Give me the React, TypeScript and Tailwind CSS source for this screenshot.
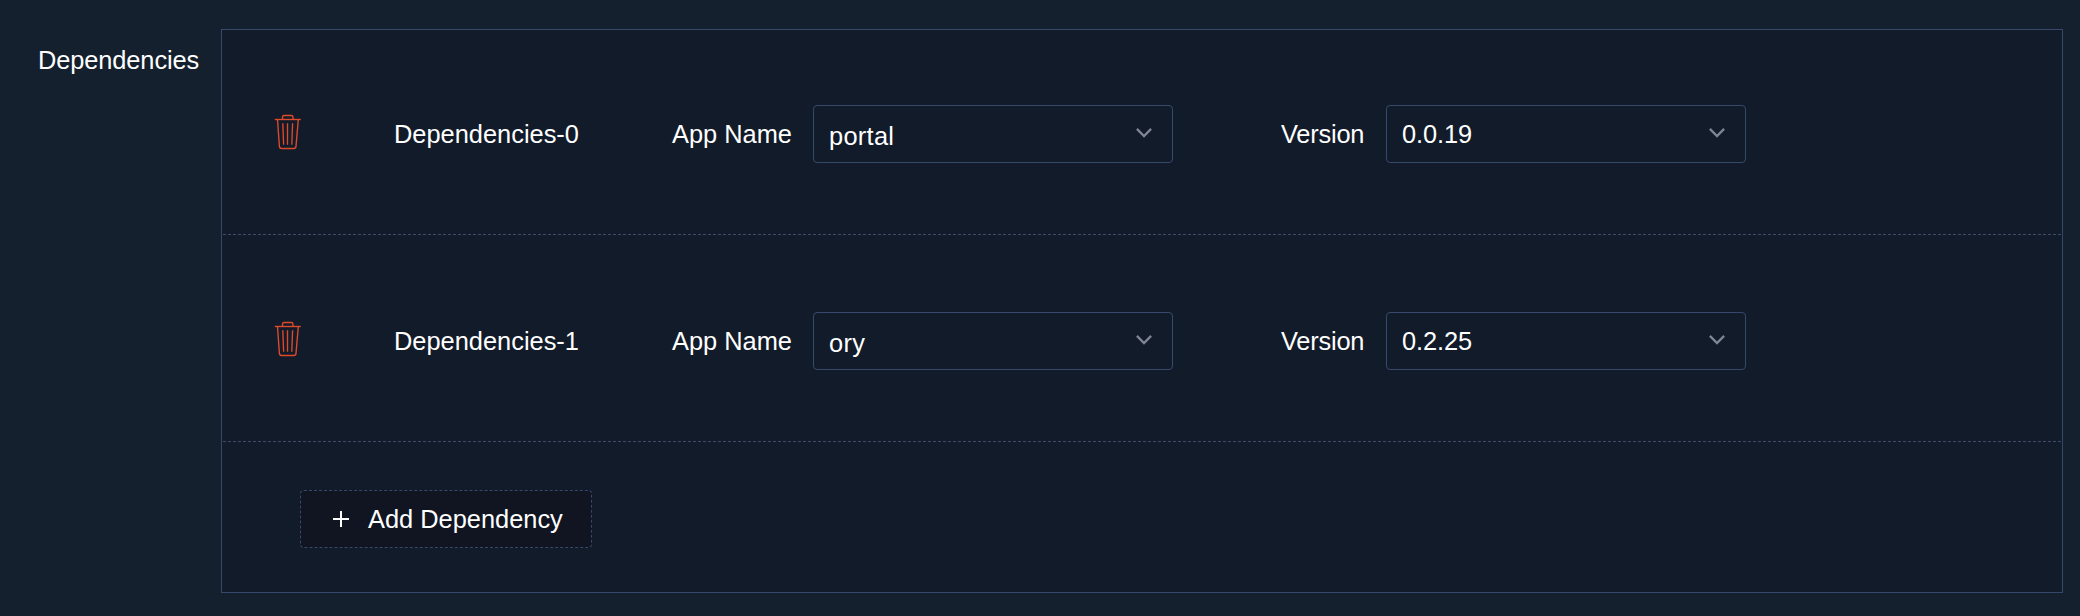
import React from "react";

type Dependency = { app: string; version: string };

const dependencies: Dependency[] = [
  { app: "portal", version: "0.0.19" },
  { app: "ory", version: "0.2.25" },
];

function TrashIcon() {
  return (
    <svg width="28" height="36" viewBox="0 0 28 36" fill="none" stroke="#e04a2a" strokeWidth="1.35">
      <path d="M0.8 5.5H26.8" />
      <path d="M8.5 5.5V3.2Q8.5 1.5 10.2 1.5H17.3Q19 1.5 19 3.2V5.5" />
      <path d="M3.5 5.5L5.4 32.4Q5.6 34.5 7.5 34.5H19.9Q21.8 34.5 22 32.4L24.3 5.5" />
      <path d="M8.8 9.3L9.6 30.8M13.5 9.3V30.8M18.6 9.3L17.8 30.8" />
    </svg>
  );
}

function ChevronIcon() {
  return (
    <svg width="16" height="10" viewBox="0 0 16 10" fill="none" stroke="#7e8594" strokeWidth="2.3">
      <path d="M0.9 0.9L8 8L15.1 0.9" />
    </svg>
  );
}

function PlusIcon() {
  return (
    <svg width="16" height="16" viewBox="0 0 16 16" fill="none" stroke="#ffffff" strokeWidth="2">
      <path d="M8 0V16M0 8H16" />
    </svg>
  );
}

function Select({ value, low }: { value: string; low?: boolean }) {
  return (
    <button className="flex h-[58px] w-[360px] shrink-0 items-center justify-between rounded-[4px] border border-[#36496b] pl-[15px] pr-[20px]">
      <span className={low ? "pt-[4px] tracking-[0.3px]" : "tracking-[-0.1px]"}>{value}</span>
      <span className="-mt-[2px]">
        <ChevronIcon />
      </span>
    </button>
  );
}

function DependencyRow({ index, app, version }: Dependency & { index: number }) {
  return (
    <div
      className={`flex items-start border-b border-dashed border-[#3e4c66] pl-[51px] ${
        index === 0 ? "h-[204px] pt-[74px]" : "h-[207px] pt-[77px]"
      }`}
    >
      <div className="flex h-[58px] w-[120px] items-center pb-[4px]">
        <TrashIcon />
      </div>
      <div className="flex h-[58px] w-[278px] items-center">Dependencies-{index}</div>
      <div className="flex h-[58px] w-[141px] items-center">App Name</div>
      <Select value={app} low />
      <div className="ml-[108px] flex h-[58px] w-[105px] items-center tracking-[-0.2px]">Version</div>
      <Select value={version} />
    </div>
  );
}

export default function App() {
  return (
    <div className="flex h-[616px] w-[2080px] bg-[#14202d] pt-[29px] font-['Liberation_Sans',Arial,sans-serif] text-[25.4px] leading-[36px] text-white">
      <div className="w-[221px] pl-[38px] pt-[13px] tracking-[-0.1px]">Dependencies</div>
      <div className="h-[564px] w-[1842px] border border-[#36496b] bg-[#121b29] p-px">
        {dependencies.map((item, index) => (
          <DependencyRow key={item.app} index={index} {...item} />
        ))}
        <div className="pl-[77px] pt-[48px]">
          <button className="flex h-[58px] w-[292px] items-center rounded-[4px] border border-dashed border-[#36496b] bg-[#111522] pl-[32px]">
            <PlusIcon />
            <span className="ml-[19px]">Add Dependency</span>
          </button>
        </div>
      </div>
    </div>
  );
}
